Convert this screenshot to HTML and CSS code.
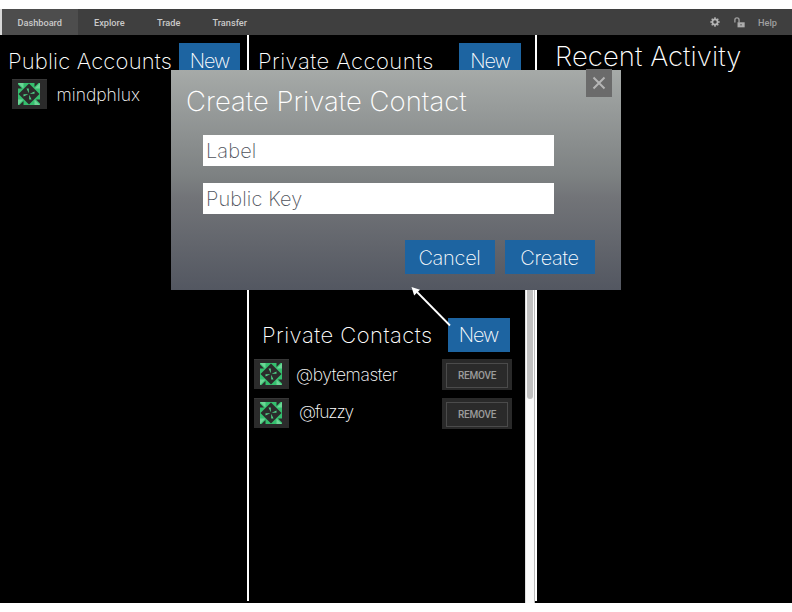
FILE: index.html
```html
<!DOCTYPE html>
<html lang="en">
<head>
<meta charset="utf-8">
<title>Dashboard</title>
<link rel="stylesheet" href="styles.css">
</head>
<body>
<svg class="defs" aria-hidden="true">
  <symbol id="identicon" viewBox="0 0 22 22">
    <rect width="22" height="22" fill="#35bf6e"/>
    <path d="M0 0h5.500v5.500zM22 0v5.500h-5.500zM22 22h-5.500v-5.500zM0 22v-5.500h5.500z" fill="#6dd596"/>
    <path d="M11 .5L21.500 11L11 21.500L.5 11z" fill="#2b2b2b"/>
    <path d="M0 1.500v4h4zM20.500 0h-4v4zM22 20.500v-4h-4zM1.500 22h4v-4z" fill="#2b2b2b"/>
    <path d="M10.800 10.300L8.500 5.500h2.300zM11.700 10.800L16.500 8.500v2.300zM11.200 11.700L13.500 16.500h-2.300zM10.300 11.200L5.500 13.500v-2.300z" fill="#4fd086"/>
  </symbol>
</svg>
<nav class="nav">
  <a class="tab active">Dashboard</a><a class="tab explore">Explore</a><a class="tab trade">Trade</a><a class="tab transfer">Transfer</a>
  <div class="tools">
    <svg class="gear" viewBox="0 0 10 10"><circle cx="5" cy="5" r="2.600" fill="none" stroke="#b4b4b4" stroke-width="1.700"/><path d="M5 .3v1.800M5 7.900v1.800M.3 5h1.800M7.900 5h1.800M1.700 1.700l1.200 1.200M7.100 7.100l1.200 1.200M1.700 8.300l1.200-1.200M7.100 2.900l1.200-1.200" stroke="#b4b4b4" stroke-width="1.500"/></svg>
    <svg class="lock" viewBox="0 0 10 10"><path d="M.8 5V2.700a1.900 1.900 0 0 1 3.800 0V5" fill="none" stroke="#a0a0a0" stroke-width="1.200"/><path d="M3.200 4.800h6.500v4.600H3.200z" fill="#acacac"/><path d="M6.400 6.300v1.400" stroke="#555" stroke-width="1"/></svg>
    <a class="help">Help</a>
  </div>
</nav>
<main class="board">
  <section class="col public">
    <header class="head"><h2 class="t-public">Public Accounts</h2><button class="btn">New</button></header>
    <div class="row"><span class="avatar"><svg><use href="#identicon"/></svg></span><span class="name n1">mindphlux</span></div>
  </section>
  <section class="col private">
    <header class="head"><h2 class="t-private">Private Accounts</h2><button class="btn">New</button></header>
    <header class="head contacts"><h2 class="t-contacts">Private Contacts</h2><button class="btn">New</button></header>
    <div class="row"><span class="avatar"><svg><use href="#identicon"/></svg></span><span class="name n2">@bytemaster</span><span class="remove"><button>REMOVE</button></span></div>
    <div class="row"><span class="avatar"><svg><use href="#identicon"/></svg></span><span class="name n3">@fuzzy</span><span class="remove"><button>REMOVE</button></span></div>
    <div class="scrollbar"><div class="thumb"></div></div>
  </section>
  <section class="col activity"><h2>Recent Activity</h2></section>
</main>
<div class="dialog">
  <button class="close"><svg viewBox="0 0 26 28"><path d="M7.500 8.500l11 11M18.500 8.500l-11 11" stroke="#b5b5b5" stroke-width="2"/></svg></button>
  <h1>Create Private Contact</h1>
  <div class="field f1">Label</div>
  <div class="field f2">Public Key</div>
  <div class="actions"><button class="btn cancel">Cancel</button><button class="btn create">Create</button></div>
</div>
<svg class="arrow" viewBox="0 0 44 44"><path d="M40 38.500L7 5" stroke="#fff" stroke-width="1.800"/><path d="M1.500 0L10 2.700L4.200 8.500z" fill="#fff"/></svg>
</body>
</html>
```

FILE: styles.css
```css
* { box-sizing: border-box; }
body { margin: 0; padding-top: 9px; width: 792px; height: 612px; overflow: hidden; background: #fff; color: #fff; font-family: Inter, "Liberation Sans", sans-serif; font-weight: 200; position: relative; }
.defs { position: absolute; width: 0; height: 0; }
h1, h2 { margin: 0; font-weight: 200; white-space: nowrap; }
button { border: 0; padding: 0; font: inherit; color: inherit; }

.nav { display: flex; height: 26px; background: #3f3f3f; border-left: 2px solid #d8d8d8; font: 500 9.200px/27px Roboto, sans-serif; color: #cacaca; }
.tab { white-space: nowrap; }
.active { width: 76px; padding-left: 15.500px; background: #4d4d4d; }
.explore { width: 63px; padding-left: 16px; }
.trade { width: 56px; padding-left: 16px; }
.transfer { padding-left: 15.500px; }
.tools { display: flex; align-items: center; margin-left: auto; padding-right: 15px; color: #9f9f9f; }
.gear { width: 10px; height: 10px; margin-right: 14px; }
.lock { width: 11px; height: 11px; margin-right: 13px; }
.help { width: 19px; }

.board { display: grid; grid-template-columns: 249px 288px 1fr; height: 568px; background: #000; }
.col { position: relative; }
.public, .private { border-right: 2px solid #fff; height: 566px; }
.head { display: flex; align-items: center; justify-content: space-between; height: 34px; }
.head h2 { font-size: 22px; line-height: 34px; padding-top: 2px; }
.public .head { margin-top: 8px; padding: 0 7px 0 8px; }
.private .head { margin-top: 8px; padding: 0 14px 0 9px; }
.private .contacts { margin-top: 241px; padding: 0 25px 0 13px; }
.head.contacts h2 { padding-top: 0; }
.btn { width: 62px; height: 34px; background: #1d64a1; font-size: 20px; line-height: 34px; padding-top: 1px; text-align: center; letter-spacing: -.3px; }
.head .btn { letter-spacing: -1px; }
.contacts .btn { padding-top: 0; padding-right: 1px; }
.public .btn { width: 61px; }
.t-public { letter-spacing: .17px; }
.t-private { letter-spacing: .48px; }
.t-contacts { letter-spacing: .48px; }

.row { display: flex; align-items: flex-start; }
.public .row { margin: 2px 0 0 12px; }
.private .row { margin: 7px 0 0 5px; height: 32px; }
.avatar { width: 35px; height: 30px; background: #2b2b2b; border-top: 1px solid #373737; padding: 3px 0 0 6px; }
.avatar svg { display: block; width: 22px; height: 22px; }
.name { font-size: 17.500px; line-height: 30px; white-space: nowrap; }
.n1 { margin-left: 9.500px; padding-top: 1px; }
.n2 { margin-left: 7px; padding-top: 1px; letter-spacing: -.4px; }
.n3 { margin-left: 10px; margin-top: -1px; letter-spacing: -1.200px; }
.remove { margin-left: auto; margin-right: 23px; width: 70px; height: 31px; background: #292929; padding: 4px; }
.remove button { display: block; width: 62px; height: 25px; border: 1px solid #4b4b4b; background: #2a2a2a; color: #9b9b9b; font: 500 10px/24px Roboto, sans-serif; letter-spacing: -.25px; }
.scrollbar { position: absolute; right: 0; top: 42px; width: 10px; height: 526px; background: #fafafa; border-left: 1px solid #ddd; border-right: 1px solid #bbb; }
.thumb { width: 6px; height: 322px; margin-left: 1px; border-radius: 0 0 3px 3px; background: #c1c1c1; }
.activity h2 { font-size: 27.500px; line-height: 34px; padding: 4px 0 0 18px; letter-spacing: .05px; }

.dialog { position: absolute; left: 171px; top: 70px; width: 450px; height: 220px; padding: 14px 26px 0 15px; background: linear-gradient(#a6aaa8, #7d8182 48%, #727478 58%, #535761); }
.dialog h1 { font-size: 27.500px; line-height: 34px; letter-spacing: 0; }
.close { position: absolute; right: 9px; top: -1px; width: 26px; height: 28px; background: #6b6b6b; }
.close svg { display: block; width: 26px; height: 28px; }
.field { width: 351px; height: 31px; margin: 17px 0 0 17px; padding-left: 3px; background: #fff; color: #4f535c; font-size: 20px; line-height: 32px; letter-spacing: .1px; }
.actions { display: flex; justify-content: flex-end; gap: 10px; margin-top: 26px; }
.actions .btn { width: 90px; padding-right: 1px; }
.arrow { position: absolute; left: 410px; top: 287px; width: 44px; height: 44px; }
```
